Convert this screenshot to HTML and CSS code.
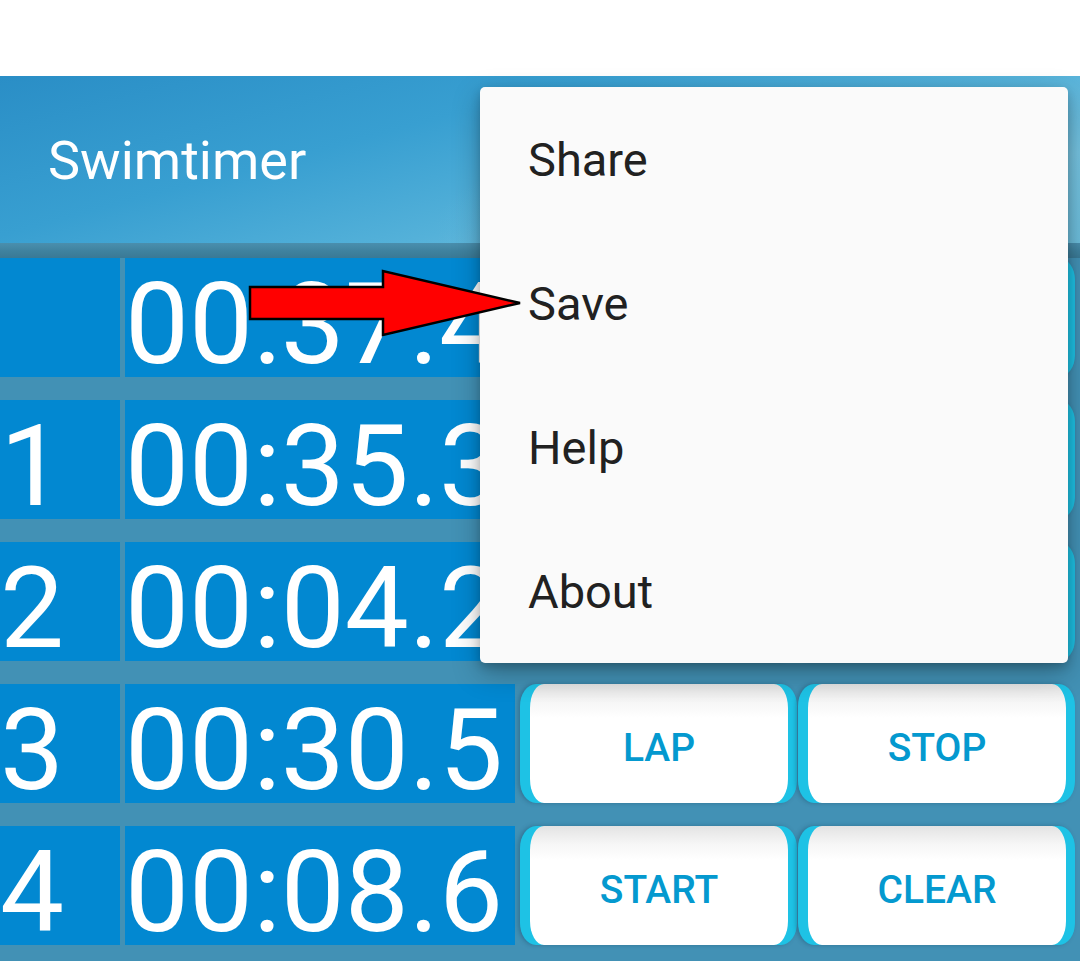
FILE: index.html
```html
<!DOCTYPE html>
<html>
<head>
<meta charset="utf-8">
<link rel="stylesheet" href="styles.css">
</head>
<body>
<div class="screen">
  <div class="status"></div>
  <div class="toolbar"><span class="title">Swimtimer</span></div>
  <div class="content">
    <div class="grid">
      <div class="cell num"></div>
      <div class="cell time">00:37.4</div>
      <div class="btns"><div class="btn"><div class="face"></div></div><div class="btn"><div class="face"></div></div></div>

      <div class="cell num">1</div>
      <div class="cell time">00:35.3</div>
      <div class="btns"><div class="btn"><div class="face"></div></div><div class="btn"><div class="face"></div></div></div>

      <div class="cell num">2</div>
      <div class="cell time">00:04.2</div>
      <div class="btns"><div class="btn"><div class="face"></div></div><div class="btn"><div class="face"></div></div></div>

      <div class="cell num">3</div>
      <div class="cell time">00:30.5</div>
      <div class="btns"><div class="btn"><div class="face">LAP</div></div><div class="btn"><div class="face">STOP</div></div></div>

      <div class="cell num">4</div>
      <div class="cell time">00:08.6</div>
      <div class="btns"><div class="btn"><div class="face">START</div></div><div class="btn"><div class="face">CLEAR</div></div></div>
    </div>
  </div>

  <div class="menu">
    <div class="item">Share</div>
    <div class="item">Save</div>
    <div class="item">Help</div>
    <div class="item">About</div>
  </div>

  <svg class="arrow" width="280" height="80" viewBox="0 0 280 80">
    <polygon points="2,18 135,18 135,2 272,34 135,66 135,50 2,50" fill="#ff0000" stroke="#000" stroke-width="2.5" stroke-linejoin="miter"/>
  </svg>
</div>
</body>
</html>
```
FILE: styles.css
```css
* { box-sizing: border-box; }
html, body { margin: 0; padding: 0; }
body {
  width: 1080px;
  height: 961px;
  overflow: hidden;
  background: #4291b5;
  font-family: Roboto, "Liberation Sans", sans-serif;
}
.screen {
  position: relative;
  width: 1080px;
  height: 961px;
  background: #4291b5;
}
.status {
  height: 76px;
  background: #ffffff;
}
.toolbar {
  height: 167px;
  display: flex;
  align-items: center;
  padding-left: 48px;
  background:
    radial-gradient(ellipse 380px 120px at 700px 150px, rgba(140, 205, 230, 0.35), rgba(140, 205, 230, 0) 70%),
    linear-gradient(165deg, #2a8ec6 0%, #389fd1 35%, #54b1d9 60%, #75c2df 80%, #6cbddb 100%);
}
.title {
  color: #ffffff;
  font-size: 54px;
  font-weight: 400;
  padding-top: 2px;
}
.content {
  padding-top: 15px;
  background: linear-gradient(#4a8fae 0px, #3f829f 8px, #3a7995 15px, #4291b5 15px);
}
.grid {
  display: grid;
  grid-template-columns: 120px 390px 555px;
  grid-auto-rows: 119px;
  column-gap: 5px;
  row-gap: 23px;
}
.cell {
  background: #0288d1;
  color: #ffffff;
  font-size: 114px;
  line-height: 105px;
  height: 119px;
  padding-top: 14px;
  white-space: nowrap;
}
.btns {
  display: flex;
  gap: 1px;
}
.btn {
  flex: 1;
  height: 119px;
  background: #1ec2e5;
  border-radius: 16px / 22px;
  padding: 0 9px 0 10px;
  overflow: hidden;
  box-shadow: -2px 0 4px rgba(20, 60, 90, 0.35);
}
.face {
  height: 100%;
  background: linear-gradient(#e3e3e3 0px, #f6f6f6 18px, #ffffff 34px);
  border-radius: 14px / 24px;
  display: flex;
  align-items: center;
  justify-content: center;
  color: #0499cf;
  font-size: 39px;
  font-weight: 500;
  padding-top: 8px;
}
.menu {
  position: absolute;
  left: 480px;
  top: 87px;
  width: 588px;
  height: 576px;
  background: #fafafa;
  border-radius: 5px;
  box-shadow: 0 10px 28px rgba(0, 0, 0, 0.28), 0 4px 10px rgba(0, 0, 0, 0.18);
}
.item {
  height: 144px;
  display: flex;
  align-items: center;
  padding-left: 48px;
  font-size: 47px;
  color: #212121;
}
.arrow {
  position: absolute;
  left: 248px;
  top: 269px;
  overflow: visible;
}
```
